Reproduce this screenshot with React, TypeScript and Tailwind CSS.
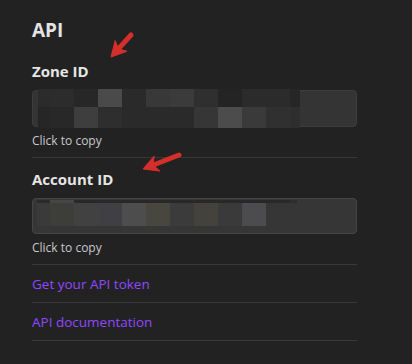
import React from "react";

type Block = { w: number; c: string };

const zoneTop: Block[] = [
  { w: 12, c: "#2b2b2b" }, { w: 24, c: "#2c2c2c" }, { w: 24, c: "#272727" }, { w: 24, c: "#4a4a4a" },
  { w: 24, c: "#2a2a2a" }, { w: 24, c: "#383838" }, { w: 24, c: "#3b3b3b" }, { w: 24, c: "#2f2f2f" },
  { w: 24, c: "#242424" }, { w: 24, c: "#2b2b2b" }, { w: 24, c: "#2b2b2b" }, { w: 10, c: "#262626" },
];
const zoneBottom: Block[] = [
  { w: 12, c: "#262626" }, { w: 24, c: "#282828" }, { w: 24, c: "#3e3e3e" }, { w: 24, c: "#2e2e2e" },
  { w: 24, c: "#2a2a2a" }, { w: 24, c: "#2a2a2a" }, { w: 24, c: "#2a2a2a" }, { w: 24, c: "#363636" },
  { w: 24, c: "#4c4c4c" }, { w: 24, c: "#3a3a3a" }, { w: 24, c: "#303030" }, { w: 10, c: "#2e2e2e" },
];
const accStrip: Block[] = [
  { w: 13, c: "#2a2a2a" }, { w: 24, c: "#464646" }, { w: 216, c: "#282828" }, { w: 7, c: "#2e2e2e" },
];
const accRow: Block[] = [
  { w: 13, c: "#3a3a3a" }, { w: 24, c: "#3d3d39" }, { w: 24, c: "#414141" }, { w: 24, c: "#403f43" },
  { w: 24, c: "#4d4d4d" }, { w: 24, c: "#47463f" }, { w: 24, c: "#3b3b3b" }, { w: 24, c: "#44423d" },
  { w: 24, c: "#3a3a3a" }, { w: 24, c: "#4c4c4e" },
];

const Row = ({ blocks, h }: { blocks: Block[]; h: number }) => (
  <div className="flex" style={{ height: h }}>
    {blocks.map((b, i) => (
      <div key={i} style={{ width: b.w, background: b.c }} />
    ))}
  </div>
);

const Arrow = ({ tip, tail }: { tip: [number, number]; tail: [number, number] }) => {
  const dx = tail[0] - tip[0];
  const dy = tail[1] - tip[1];
  const len = Math.hypot(dx, dy);
  const ux = dx / len, uy = dy / len;
  const nx = -uy, ny = ux;
  const hl = 15, hw = 8, notch = 11;
  const bx = tip[0] + hl * ux, by = tip[1] + hl * uy;
  const mx = tip[0] + notch * ux, my = tip[1] + notch * uy;
  const pts = [
    [tip[0], tip[1]],
    [bx + hw * nx, by + hw * ny],
    [mx, my],
    [bx - hw * nx, by - hw * ny],
  ].map((p) => p.join(",")).join(" ");
  return (
    <g fill="#d42f2b" stroke="#d42f2b">
      <line x1={mx} y1={my} x2={tail[0]} y2={tail[1]} strokeWidth={5} strokeLinecap="round" />
      <polygon points={pts} strokeWidth={1} strokeLinejoin="round" />
    </g>
  );
};

const Copy = () => (
  <div className="mt-[6px] text-[12px] leading-[16px] text-[#c9c6cc] pb-[8px] border-b border-[#383838]">
    Click to copy
  </div>
);

export default function App() {
  return (
    <div
      className="relative w-[412px] h-[364px] bg-[#222222] overflow-hidden"
      style={{ fontFamily: "'Open Sans', 'Noto Sans', sans-serif" }}
    >
      <div className="w-[357px] pl-[32px]">
        <h2 className="mt-[18px] text-[19px] leading-[24px] font-bold text-[#e4e4e4]">API</h2>

        <div className="mt-[18px] text-[15px] leading-[22px] font-bold text-[#e6e6e6]">Zone ID</div>
        <div className="mt-[8px] h-[37px] rounded-[4px] border border-[#3d3d3d] bg-[#343434]">
          <div className="ml-[5px] -mt-[2px] flex flex-col">
            <Row blocks={zoneTop} h={18} />
            <Row blocks={zoneBottom} h={21} />
          </div>
        </div>
        <Copy />

        <div className="mt-[10px] text-[15px] leading-[22px] font-bold text-[#e6e6e6]">Account ID</div>
        <div className="mt-[8px] h-[36px] rounded-[4px] border border-[#454545] bg-[#363636]">
          <div className="ml-[4px] mt-[1px] flex flex-col">
            <Row blocks={accStrip} h={3} />
            <Row blocks={accRow} h={23} />
          </div>
        </div>
        <Copy />

        <a className="block pt-[9px] pb-[8px] text-[13.5px] leading-[20px] text-[#9147ff] border-b border-[#383838]">
          Get your API token
        </a>
        <a className="block pt-[9px] pb-[8px] text-[13.5px] leading-[20px] text-[#9147ff] border-b border-[#383838]">
          API documentation
        </a>
      </div>

      <svg className="absolute left-0 top-0 pointer-events-none" width="412" height="364">
        <Arrow tip={[111, 57]} tail={[131, 35]} />
        <Arrow tip={[143, 169]} tail={[179, 155]} />
      </svg>
    </div>
  );
}
